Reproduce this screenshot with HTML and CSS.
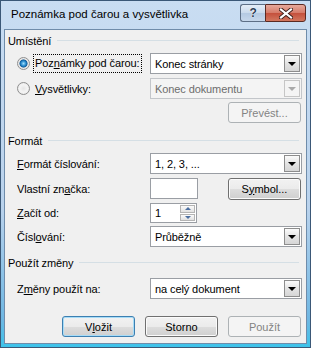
FILE: index.html
```html
<!DOCTYPE html>
<html lang="cs">
<head>
  <meta charset="UTF-8">
  <title>Poznámka pod čarou a vysvětlivka</title>
  <link rel="stylesheet" href="styles.css">
</head>
<body>

<div class="okno">
  <div class="titulek">
    <span class="titulek-text">Poznámka pod čarou a vysvětlivka</span>
    <div class="titulek-tlacitka">
      <span class="tl-napoveda">?</span>
      <span class="tl-zavrit">
        <svg width="14" height="11" viewBox="0 0 14 11">
          <path d="M2 1.5 L12 9.5 M12 1.5 L2 9.5" stroke="#3b1e1a" stroke-width="4" stroke-linecap="square"/>
          <path d="M2 1.5 L12 9.5 M12 1.5 L2 9.5" stroke="#ffffff" stroke-width="2.2" stroke-linecap="square"/>
        </svg>
      </span>
    </div>
  </div>

  <div class="obsah">
    <div class="skupina g1"><span>Umístění</span></div>

    <div class="radek r-pozn">
      <label class="popis"><span class="radio zapnuto"></span><span class="fokus">Poz<u>n</u>ámky pod čarou:</span></label>
      <div class="vyber"><span class="vyber-text">Konec stránky</span><span class="vyber-sipka"><i></i></span></div>
    </div>

    <div class="radek r-vysv">
      <label class="popis"><span class="radio"></span><span class="text-radia"><u>V</u>ysvětlivky:</span></label>
      <div class="vyber vypnuto"><span class="vyber-text">Konec dokumentu</span><span class="vyber-sipka"><i></i></span></div>
    </div>

    <div class="radek r-prevest">
      <button class="tlacitko neaktivni">Převést...</button>
    </div>

    <div class="skupina g2"><span>Formát</span></div>

    <div class="radek r-format">
      <label class="popis"><u>F</u>ormát číslování:</label>
      <div class="vyber"><span class="vyber-text">1, 2, 3, ...</span><span class="vyber-sipka"><i></i></span></div>
    </div>

    <div class="radek r-znacka">
      <label class="popis">Vlastní zn<u>a</u>čka:</label>
      <div class="pole"></div>
      <button class="tlacitko">S<u>y</u>mbol...</button>
    </div>

    <div class="radek r-zacit">
      <label class="popis"><u>Z</u>ačít od:</label>
      <div class="pole cislo">
        <span class="pole-text">1</span>
        <span class="spin">
          <span class="spin-nahoru"><i></i></span>
          <span class="spin-dolu"><i></i></span>
        </span>
      </div>
    </div>

    <div class="radek r-cislovani">
      <label class="popis">Čísl<u>o</u>vání:</label>
      <div class="vyber"><span class="vyber-text">Průběžně</span><span class="vyber-sipka"><i></i></span></div>
    </div>

    <div class="skupina g3"><span>Použít změny</span></div>

    <div class="radek r-zmeny">
      <label class="popis">Z<u>m</u>ěny použít na:</label>
      <div class="vyber"><span class="vyber-text">na celý dokument</span><span class="vyber-sipka"><i></i></span></div>
    </div>

    <div class="radek r-tlacitka">
      <button class="tlacitko vychozi">V<u>l</u>ožit</button>
      <button class="tlacitko">Storno</button>
      <button class="tlacitko neaktivni">Použít</button>
    </div>
  </div>
</div>

</body>
</html>
```

FILE: styles.css
```css
body {
  margin: 0;
  font-family: 'Liberation Sans', Arial, sans-serif;
  font-size: 11px;
  letter-spacing: -0.1px;
  color: #000000;
}

.okno {
  width: 311px;
  height: 348px;
  box-sizing: border-box;
  display: flex;
  flex-direction: column;
  border: 1px solid #3b5877;
  background: linear-gradient(#c9ddf2, #b9d2ec 60%, #6fb7e3 92%, #3cc3ea);
  padding: 0 3px 3px 3px;
}

/* titulkovy pruh */
.titulek {
  height: 28px;
  flex-shrink: 0;
  display: flex;
  justify-content: space-between;
  align-items: flex-start;
  padding-left: 7px;
}

.titulek-text {
  margin-top: 7px;
  font-size: 11.5px;
  letter-spacing: 0;
  white-space: nowrap;
}

.titulek-tlacitka {
  display: flex;
  margin-top: 3px;
  margin-right: 1px;
}

.tl-napoveda, .tl-zavrit {
  height: 18px;
  box-sizing: border-box;
  display: flex;
  align-items: center;
  justify-content: center;
}

.tl-napoveda {
  width: 25px;
  border: 1px solid #5d6f86;
  border-right: none;
  border-radius: 3px 0 0 3px;
  background: linear-gradient(#e4edf7, #c9d9ec 50%, #b4c9e2 51%, #c6d7eb);
  font-weight: bold;
  font-size: 12px;
  color: #2c3e55;
  text-shadow: 0 0 1px #ffffff, 0 0 1px #ffffff;
}

.tl-zavrit {
  width: 41px;
  border: 1px solid #5b2a22;
  border-radius: 0 3px 3px 0;
  background: linear-gradient(#e7a99b, #d57a68 50%, #c4503c 51%, #d2775f);
}

/* obsah dialogu */
.obsah {
  flex: 1;
  background: #f0f0f0;
  border: 1px solid #6f8caa;
  padding: 3px 3px 0 3px;
  display: flex;
  flex-direction: column;
}

.skupina {
  height: 15px;
  display: flex;
  align-items: center;
  padding-right: 4px;
}

.skupina::after {
  content: "";
  flex: 1;
  height: 1px;
  margin-left: 6px;
  background: #d5dfe5;
}

.g2 { margin-top: 10px; }
.g3 { margin-top: 8px; }

.radek {
  display: flex;
  align-items: center;
  height: 21px;
  padding-left: 9px;
  padding-right: 1px;
}

.r-pozn { margin-top: 5px; }
.r-vysv { margin-top: 4px; }
.r-prevest { margin-top: 3px; justify-content: flex-end; padding-right: 2px; }
.r-format { margin-top: 5px; }
.r-znacka { margin-top: 4px; }
.r-zacit { margin-top: 4px; height: 20px; }
.r-cislovani { margin-top: 3px; }
.r-zmeny { margin-top: 8px; }
.r-tlacitka { margin-top: 17px; justify-content: flex-end; gap: 10px; padding-right: 2px; }

.popis {
  width: 133px;
  flex-shrink: 0;
  display: flex;
  align-items: center;
  white-space: nowrap;
}

/* prepinace */
.radio {
  width: 13px;
  height: 13px;
  box-sizing: border-box;
  border-radius: 50%;
  border: 1px solid #8f8f8f;
  background: radial-gradient(circle, #e6e6e6 0, #f4f4f4 50%, #dcdcdc 100%);
  margin-right: 3px;
  flex-shrink: 0;
}

.radio.zapnuto {
  background: radial-gradient(circle, #9ee0ff 0, #1c7fc5 35%, #1a5f98 48%, #e2e2e2 56%, #f4f4f4 80%, #d7d7d7 100%);
}

.fokus {
  border: 1px dotted #000000;
  padding: 2px 1px 3px 1px;
}

.text-radia {
  padding-left: 2px;
}

/* rozbalovaci seznam */
.vyber {
  width: 152px;
  height: 21px;
  box-sizing: border-box;
  border: 1px solid #9a9ea4;
  background: #ffffff;
  display: flex;
  align-items: center;
  justify-content: space-between;
  padding: 1px;
}

.vyber-text {
  padding-left: 3px;
}

.vyber-sipka {
  width: 16px;
  height: 17px;
  box-sizing: border-box;
  border: 1px solid #8d8d8d;
  background: linear-gradient(#fbfbfb, #e4e4e4 50%, #d6d6d6);
  display: flex;
  align-items: center;
  justify-content: center;
}

.vyber-sipka i {
  width: 0;
  height: 0;
  border-left: 4px solid transparent;
  border-right: 4px solid transparent;
  border-top: 4px solid #000000;
}

.vyber.vypnuto {
  background: #f4f4f4;
  border-color: #c3c6ca;
  color: #6d6d6d;
}

.vyber.vypnuto .vyber-sipka {
  border-color: #c6c6c6;
  background: #f4f4f4;
}

.vyber.vypnuto .vyber-sipka i {
  border-top-color: #a9a9a9;
}

/* textova pole */
.pole {
  width: 48px;
  height: 21px;
  box-sizing: border-box;
  border: 1px solid #9a9ea4;
  background: #ffffff;
}

.pole.cislo {
  height: 20px;
  width: 47px;
  display: flex;
  align-items: center;
  justify-content: space-between;
  padding: 1px;
}

.pole-text {
  padding-left: 3px;
}

.spin {
  width: 15px;
  height: 16px;
  display: flex;
  flex-direction: column;
  gap: 1px;
}

.spin-nahoru, .spin-dolu {
  flex: 1;
  border: 1px solid #b4b4b4;
  background: linear-gradient(#fbfbfb, #e1e1e1);
  display: flex;
  align-items: center;
  justify-content: center;
}

.spin-nahoru i {
  border-left: 3px solid transparent;
  border-right: 3px solid transparent;
  border-bottom: 3px solid #4c6fa0;
}

.spin-dolu i {
  border-left: 3px solid transparent;
  border-right: 3px solid transparent;
  border-top: 3px solid #4c6fa0;
}

/* tlacitka */
.tlacitko {
  width: 73px;
  height: 21px;
  box-sizing: border-box;
  font-family: inherit;
  font-size: 11px;
  color: #000000;
  border: 1px solid #707070;
  border-radius: 3px;
  background: linear-gradient(#f2f2f2, #ebebeb 50%, #dddddd 51%, #cfcfcf);
  box-shadow: inset 0 0 0 1px #fbfbfb;
  padding: 0;
}

.r-znacka .tlacitko {
  margin-left: auto;
  margin-right: 1px;
  height: 22px;
}

.tlacitko.vychozi {
  border-color: #3c7fb1;
  box-shadow: inset 0 0 0 1px #a7dcf7;
}

.tlacitko.neaktivni {
  color: #838383;
  border-color: #adb2b5;
  background: #f4f4f4;
  box-shadow: none;
}
```
